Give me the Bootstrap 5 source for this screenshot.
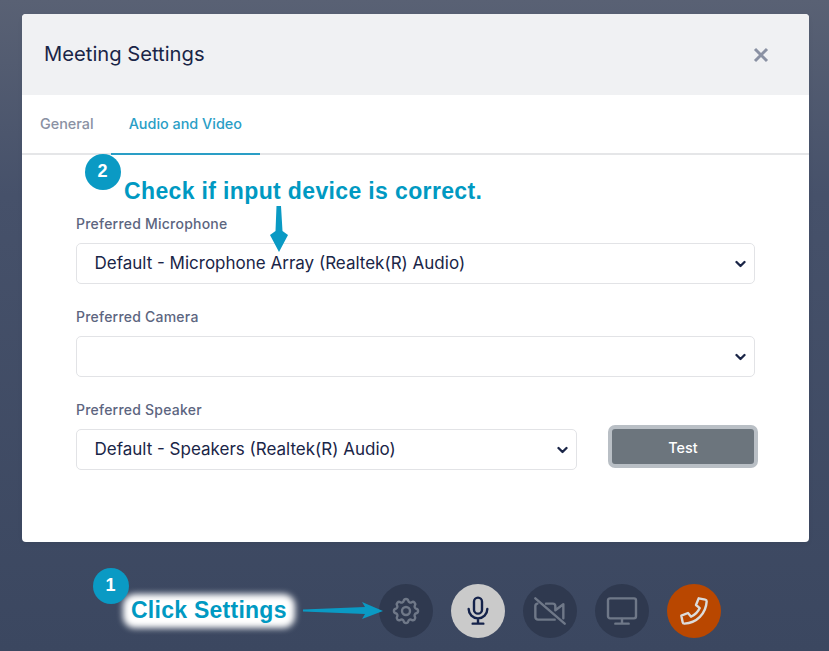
<!DOCTYPE html>
<html lang="en">
<head>
    <meta charset="UTF-8">
    <title>Meeting Settings</title>
    <meta name="viewport" content="width=device-width, initial-scale=1">
    <link href="https://cdn.jsdelivr.net/npm/bootstrap@5.3.0/dist/css/bootstrap.min.css" rel="stylesheet">
    <style>
        html, body { height: 100%; overflow: hidden; }
        body { position: relative; font-family: Inter, "Liberation Sans", sans-serif; color: #1a2547; background: linear-gradient(180deg, #596174 0%, #46516a 30%, #3b4760 100%); }
        .settings-box { position: relative; width: 787px; height: 528px; margin: 14px 0 0 22px; background: #fff; border-radius: 4px; overflow: hidden; }
        .settings-head { height: 81px; padding: 0 22px; background: #f0f1f3; }
        .settings-title { font-size: 20.2px; font-weight: 400; margin: 0; color: #1a2547; }
        .close-x { width: 18px; height: 18px; margin-right: 17px; }
        .tab-row { height: 60px; border-bottom: 2px solid #e5e6e8; }
        .tab-row .nav-link { height: 60px; padding: 0 18px; font-size: 14.4px; line-height: 58px; font-weight: 500; color: #8a91a3; border: 0; border-bottom: 2px solid transparent; background: none; border-radius: 0; }
        .tab-row .nav-item:first-child .nav-link { padding-right: 17px; }
        .tab-row .nav-link.active { color: #2a9ec6; border-bottom-color: #2a9ec6; }
        .settings-form { padding: 60px 54px 0; }
        .settings-form .form-label { display: block; font-size: 14px; font-weight: 500; line-height: 18px; margin: 0 0 10px; color: #5c6580; letter-spacing: .22px; }
        .settings-form .form-select { height: 41px; padding: 0 36px 0 17.500px; font-size: 17px; color: #1a2547; border-color: #e2e3e6; border-radius: 5px; background-size: 11px 8px; background-position: right 8px center; background-image: url("data:image/svg+xml,%3csvg xmlns='http://www.w3.org/2000/svg' viewBox='0 0 16 12'%3e%3cpath fill='none' stroke='%231a2547' stroke-linecap='round' stroke-linejoin='round' stroke-width='3.500' d='M2 3l6 6 6-6'/%3e%3c/svg%3e"); }
        .field-gap { margin-bottom: 24px; }
        .speaker-select { width: 501px; flex: none; }
        .test-btn { flex: none; width: 150px; height: 43px; margin: -4px 0 0 31px; font-size: 14.4px; line-height: 37px; font-weight: 500; color: #fff; background: #6c757d; border: 4px solid #b9bfc5; border-radius: 7px; padding: 0; }
        .call-bar { gap: 18px; margin: 42px 0 0 379px; }
        .call-btn { width: 54px; height: 54px; border-radius: 50%; background: #2f394f; }
        .call-btn svg { width: 32px; height: 32px; fill: none; stroke: #6f7888; stroke-width: 1.800; stroke-linecap: round; stroke-linejoin: round; }
        .call-btn.mic-on { background: #cacaca; }
        .call-btn.mic-on svg { stroke: #14224a; }
        .call-btn.hang-up { background: #b94700; }
        .call-btn.hang-up svg { stroke: #dcdcdc; }
        .step-dot { position: absolute; width: 36px; height: 36px; border-radius: 50%; background: #0a9ac4; color: #fff; font: 700 18px/35px "Liberation Sans", sans-serif; text-align: center; padding-right: 1px; }
        .step-two { left: 85px; top: 154px; }
        .step-one { left: 93px; top: 568px; }
        .note-text { position: absolute; font-family: "Liberation Sans", sans-serif; font-weight: 700; color: #0099c2; white-space: nowrap; }
        .note-check { left: 124px; top: 177px; font-size: 23px; line-height: 28px; letter-spacing: .36px; }
        .note-click { left: 131px; top: 596px; font-size: 23px; line-height: 28px; letter-spacing: .26px; }
        /* blurred white plate behind the label */
        .note-click::before { content: ""; position: absolute; z-index: -1; inset: -2px -8px -4px -8px; background: #fff; border-radius: 12px; filter: blur(3px); }
        .note-arrow { position: absolute; }
        .arrow-down { left: 270px; top: 205px; width: 18px; height: 47px; }
        .arrow-right { left: 303px; top: 601px; width: 80px; height: 20px; }
    </style>
</head>
<body>

<!-- dialog -->
<div class="settings-box shadow-sm">
    <div class="settings-head d-flex align-items-center justify-content-between">
        <h5 class="settings-title">Meeting Settings</h5>
        <svg class="close-x" viewBox="0 0 18 18"><path d="M3 3l12 12M15 3L3 15" stroke="#8a91a3" stroke-width="3" fill="none"/></svg>
    </div>
    <ul class="nav tab-row">
        <li class="nav-item"><a class="nav-link" href="#">General</a></li>
        <li class="nav-item"><a class="nav-link active" href="#">Audio and Video</a></li>
    </ul>
    <div class="settings-form">
        <div class="field-gap">
            <label class="form-label">Preferred Microphone</label>
            <select class="form-select"><option>Default - Microphone Array (Realtek(R) Audio)</option></select>
        </div>
        <div class="field-gap">
            <label class="form-label">Preferred Camera</label>
            <select class="form-select"><option></option></select>
        </div>
        <div>
            <label class="form-label">Preferred Speaker</label>
            <div class="d-flex align-items-start">
                <select class="form-select speaker-select"><option>Default - Speakers (Realtek(R) Audio)</option></select>
                <button class="btn test-btn" type="button">Test</button>
            </div>
        </div>
    </div>
</div>

<!-- call controls -->
<div class="call-bar d-flex">
    <div class="call-btn d-flex align-items-center justify-content-center">
        <svg viewBox="0 0 24 24"><path d="M10.300 4.300c.4-1.800 3-1.800 3.400 0a1.700 1.700 0 0 0 2.600 1.100c1.500-.9 3.300.8 2.400 2.400a1.700 1.700 0 0 0 1 2.500c1.800.4 1.800 3 0 3.400a1.700 1.700 0 0 0-1 2.600c.9 1.500-.9 3.300-2.400 2.400a1.700 1.700 0 0 0-2.600 1c-.4 1.800-3 1.800-3.400 0a1.700 1.700 0 0 0-2.600-1c-1.500.9-3.300-.9-2.400-2.400a1.700 1.700 0 0 0-1-2.600c-1.800-.4-1.800-3 0-3.400a1.700 1.700 0 0 0 1-2.500c-.9-1.600.9-3.300 2.400-2.400a1.700 1.700 0 0 0 2.600-1.100z"/><circle cx="12" cy="12" r="3"/></svg>
    </div>
    <div class="call-btn mic-on d-flex align-items-center justify-content-center">
        <svg viewBox="0 0 24 24"><rect x="9" y="2" width="6" height="12" rx="3"/><path d="M5 10.500a7 7 0 0 0 14 0M12 17.500V21M8 21.500h8"/></svg>
    </div>
    <div class="call-btn d-flex align-items-center justify-content-center">
        <svg viewBox="0 0 24 24"><path d="M1 2.500l22 19M9 6.500h5a2 2 0 0 1 2 2v3l6-4.500v10.500M15.500 18.500H3a2 2 0 0 1-2-2V8.500a2 2 0 0 1 1.500-2"/></svg>
    </div>
    <div class="call-btn d-flex align-items-center justify-content-center">
        <svg viewBox="0 0 24 24"><rect x="1.500" y="2.500" width="21" height="15" rx="1.500"/><path d="M12 18v3M7 21.500h10"/></svg>
    </div>
    <div class="call-btn hang-up d-flex align-items-center justify-content-center">
        <svg viewBox="0 0 24 24"><path d="M15.500 2.500l5 1c.6.1 1 .7 1 1.300C21 14 14 21 4.800 21.500c-.6 0-1.200-.4-1.300-1l-1-5 5-2 2.300 2.800a13 13 0 0 0 6.500-6.500L13.500 7.500z"/></svg>
    </div>
</div>

<!-- annotations -->
<div class="step-dot step-two">2</div>
<div class="note-text note-check">Check if input device is correct.</div>
<svg class="note-arrow arrow-down" viewBox="0 0 18 47"><path d="M6.500 1h4.500L12.500 26 18 30 9 47 0 30 5.500 26z" fill="#0a9ac4"/></svg>
<div class="step-dot step-one">1</div>
<div class="note-text note-click">Click Settings</div>
<svg class="note-arrow arrow-right" viewBox="0 0 80 20"><path d="M0 8.500L62 6 59 1l21 9-21 8 3-5L0 10.500z" fill="#0a9ac4"/></svg>

<script src="https://cdn.jsdelivr.net/npm/bootstrap@5.3.0/dist/js/bootstrap.bundle.min.js"></script>
</body>
</html>
